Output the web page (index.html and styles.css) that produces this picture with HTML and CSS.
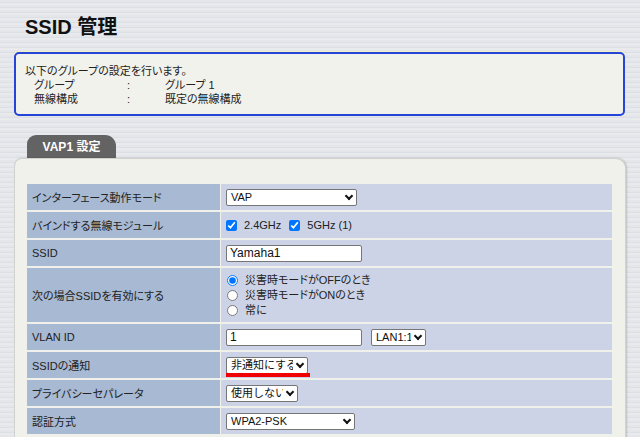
FILE: index.html
```html
<!DOCTYPE html>
<html lang="ja">
<head>
    <meta charset="UTF-8">
    <meta name="viewport" content="width=device-width, initial-scale=1.0">
    <title>SSID 管理</title>
    <link rel="stylesheet" href="styles.css">
</head>
<body>

    <h1>SSID 管理</h1>

    <div class="info-box">
        <p>以下のグループの設定を行います。</p>
        <div class="info-row">
            <span>グループ</span><span>:</span><span>グループ 1</span>
        </div>
        <div class="info-row">
            <span>無線構成</span><span>:</span><span>既定の無線構成</span>
        </div>
    </div>

    <div class="tab">VAP1 設定</div>
    <div class="panel">
        <div class="form-grid">
            <div class="label">インターフェース動作モード</div>
            <div class="value">
                <span class="select">
                    <select class="sel-mode">
                        <option>VAP</option>
                    </select>
                </span>
            </div>

            <div class="label">バインドする無線モジュール</div>
            <div class="value">
                <label class="check"><input type="checkbox" checked> 2.4GHz</label>
                <label class="check"><input type="checkbox" checked> 5GHz (1)</label>
            </div>

            <div class="label">SSID</div>
            <div class="value">
                <input type="text" class="text-input" value="Yamaha1">
            </div>

            <div class="label">次の場合SSIDを有効にする</div>
            <div class="value radios">
                <label><input type="radio" name="enable" checked>災害時モードがOFFのとき</label>
                <label><input type="radio" name="enable">災害時モードがONのとき</label>
                <label><input type="radio" name="enable">常に</label>
            </div>

            <div class="label">VLAN ID</div>
            <div class="value">
                <input type="text" class="text-input" value="1">
                <span class="select lan">
                    <select class="sel-lan">
                        <option>LAN1:1</option>
                    </select>
                </span>
            </div>

            <div class="label">SSIDの通知</div>
            <div class="value">
                <span class="marked">
                    <span class="select">
                        <select class="sel-notify">
                            <option>非通知にする</option>
                        </select>
                    </span>
                </span>
            </div>

            <div class="label">プライバシーセパレータ</div>
            <div class="value">
                <span class="select">
                    <select class="sel-privacy">
                        <option>使用しない</option>
                    </select>
                </span>
            </div>

            <div class="label">認証方式</div>
            <div class="value">
                <span class="select">
                    <select class="sel-auth">
                        <option>WPA2-PSK</option>
                    </select>
                </span>
            </div>
        </div>
    </div>

</body>
</html>
```

FILE: styles.css
```css
body {
    font-family: "Liberation Sans", "Noto Sans CJK JP", sans-serif;
    font-size: 11px;
    font-feature-settings: "palt";
    color: #222;
    margin: 0;
    padding: 0 15px 0 14px;
    height: 437px;
    overflow: hidden;
    box-sizing: border-box;
    background: repeating-linear-gradient(to bottom, #e4e6ea 0, #e4e6ea 2px, #dcdfe3 2px, #dcdfe3 3px, #e8eaed 3px, #e8eaed 5px);
}

h1 {
    font-size: 20px;
    line-height: 26px;
    margin: 0;
    padding: 14px 0 0 11px;
    height: 26px;
    margin-bottom: 12px;
    color: #111;
}

.info-box {
    border: 2px solid #2544d8;
    border-radius: 5px;
    background-color: #f2f2ec;
    box-shadow: 0 -1px 1px #f4efc0;
    padding: 10px 9px 8px;
    height: 42px;
    line-height: 14px;
}

.info-box p {
    margin: 0;
}

.info-row {
    display: grid;
    grid-template-columns: 93px 38px auto;
    padding-left: 9px;
}

.tab {
    margin: 19px 0 0 13px;
    width: 89px;
    height: 23px;
    line-height: 24px;
    text-align: center;
    background-color: #636363;
    color: #fff;
    font-weight: bold;
    font-size: 12px;
    border-radius: 9px 11px 0 0;
}

.panel {
    background-color: #f1f1eb;
    border: 1px solid #d2d2d0;
    border-bottom: none;
    border-radius: 8px 10px 0 0;
    box-shadow: 1px 0 2px rgba(0, 0, 0, 0.18);
    padding: 25px 13px 20px 12px;
    margin-right: -1px;
}

.form-grid {
    display: grid;
    grid-template-columns: 193px 1fr;
    grid-auto-rows: 26px;
    gap: 2px 1px;
}

.form-grid > :nth-child(7),
.form-grid > :nth-child(8) {
    grid-row: span 2;
}

.label {
    background-color: #a7b9d3;
    padding-left: 5px;
    display: flex;
    align-items: center;
}

.value {
    background-color: #ccd3e6;
    padding-left: 5px;
    display: flex;
    align-items: center;
}

select,
.text-input {
    font-family: "Liberation Sans", "Noto Sans CJK JP", sans-serif;
    font-size: 11px;
    height: 17px;
    box-sizing: border-box;
    border: 1px solid #767676;
    border-radius: 2px;
    background-color: #fff;
    color: #111;
    margin: 0;
}

select {
    -webkit-appearance: none;
    appearance: none;
    padding: 0 14px 0 4px;
    display: block;
}

.text-input {
    width: 136px;
    padding: 0 3px;
    font-size: 12px;
}

.select {
    position: relative;
    display: inline-block;
}

/* chevron drawn over the right side of the select */
.select::after {
    content: "";
    position: absolute;
    right: 5px;
    top: 4px;
    width: 4px;
    height: 4px;
    border-right: 2px solid #111;
    border-bottom: 2px solid #111;
    transform: rotate(45deg);
    pointer-events: none;
}

.select.lan {
    margin-left: 9px;
}

.sel-mode { width: 131px; }
.sel-lan { width: 55px; }
.sel-notify { width: 82px; }
.sel-privacy { width: 72px; }
.sel-auth { width: 129px; }

.check {
    display: flex;
    align-items: center;
    margin-right: 8px;
}

.check input {
    width: 11px;
    height: 11px;
    margin: 0 7px 0 0;
}

.radios {
    flex-direction: column;
    align-items: flex-start;
    justify-content: center;
    line-height: 15px;
}

.radios label {
    display: flex;
    align-items: center;
}

.radios input {
    width: 11px;
    height: 11px;
    margin: 0 7px 0 1px;
}

.marked {
    position: relative;
    display: inline-block;
}

/* red annotation under the select */
.marked::after {
    content: "";
    position: absolute;
    left: 0;
    right: -2px;
    bottom: -3px;
    height: 4px;
    background-color: #f00000;
}
```
